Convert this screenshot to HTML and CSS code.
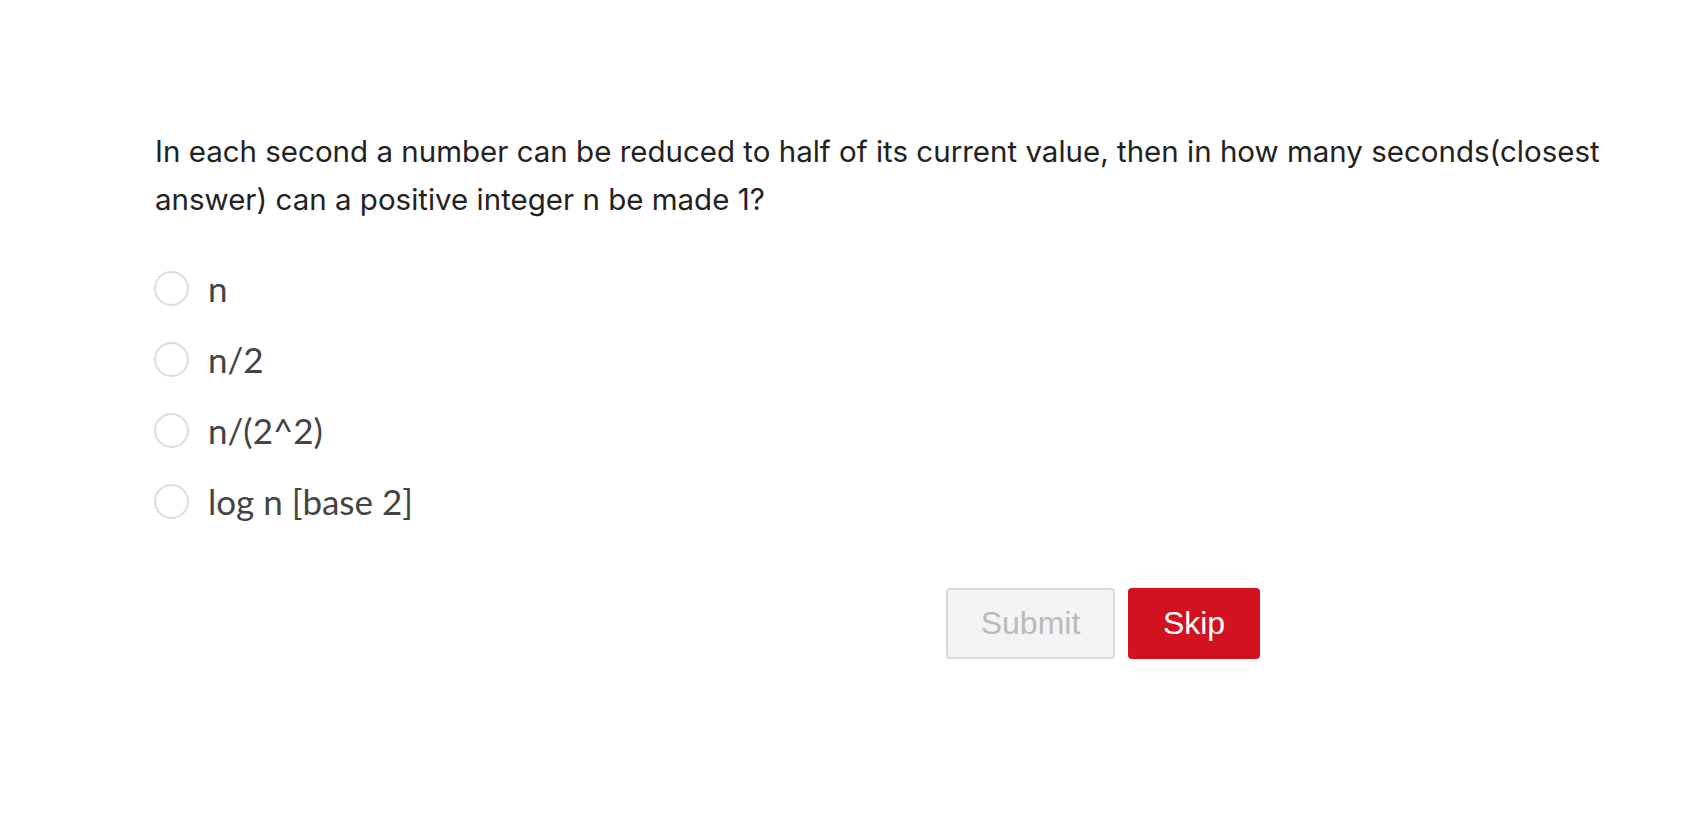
FILE: index.html
```html
<!DOCTYPE html>
<html lang="en">
<head>
<meta charset="utf-8">
<title>Question</title>
<link rel="stylesheet" href="styles.css">
</head>
<body>
<main class="quiz">
  <p class="question">In each second a number can be reduced to half of its current value, then in how many seconds(closest answer) can a positive integer n be made 1?</p>
  <ul class="options">
    <li class="option"><span class="radio"></span><span class="label">n</span></li>
    <li class="option"><span class="radio"></span><span class="label">n/2</span></li>
    <li class="option"><span class="radio"></span><span class="label">n/(2^2)</span></li>
    <li class="option"><span class="radio"></span><span class="label">log n [base 2]</span></li>
  </ul>
  <div class="actions">
    <button class="btn btn-submit" disabled>Submit</button>
    <button class="btn btn-skip">Skip</button>
  </div>
</main>
</body>
</html>
```
FILE: styles.css
```css
html, body {
  margin: 0;
  padding: 0;
  background: #ffffff;
}
.quiz {
  padding: 127px 60px 0 154px;
}
.question {
  margin: 0 0 0 1px;
  font-family: Inter, "Liberation Sans", sans-serif;
  font-size: 29.5px;
  line-height: 48px;
  color: #222222;
}
.options {
  list-style: none;
  margin: 48px 0 0 0;
  padding: 0;
  display: flex;
  flex-direction: column;
  gap: 36px;
}
.option {
  display: flex;
  align-items: center;
  gap: 19px;
  height: 35px;
}
.radio {
  width: 31px;
  height: 31px;
  border: 2px solid #dcdcdc;
  border-radius: 50%;
  flex: none;
  box-sizing: content-box;
}
.label {
  font-family: Lato, "Noto Sans", sans-serif;
  font-size: 35px;
  color: #444444;
  line-height: 35px;
}
.actions {
  max-width: 1106px;
  display: flex;
  justify-content: flex-end;
  gap: 13px;
  margin-top: 69px;
}
.btn {
  height: 71px;
  border-radius: 4px;
  font-family: "Liberation Sans", Arial, sans-serif;
  font-size: 32px;
  padding: 0;
  cursor: pointer;
}
.btn-submit {
  width: 169px;
  background: #f4f4f4;
  border: 2px solid #dadada;
  color: #bbbbbb;
  cursor: default;
}
.btn-skip {
  width: 132px;
  background: #d2121f;
  border: none;
  color: #ffffff;
}
```
